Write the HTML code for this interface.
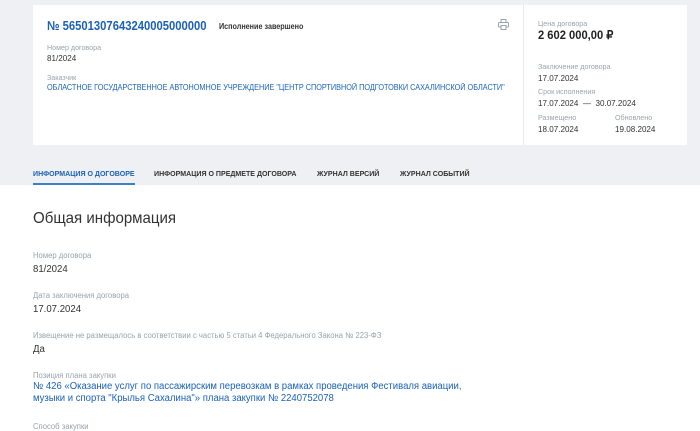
<!DOCTYPE html>
<html><head><meta charset="utf-8"><style>
body{margin:0;width:700px;height:427px;overflow:hidden;background:#fff;font-family:"Liberation Sans",sans-serif;position:relative}
.a{position:absolute;white-space:nowrap;transform-origin:0 0}
.gray{position:absolute;left:0;top:0;width:700px;height:185px;background:#eef0f3}
.card{position:absolute;left:33px;top:5px;width:654px;height:140px;background:#fff}
.div{position:absolute;left:523px;top:5px;width:1px;height:140px;background:#e8eaee}
.l{font-size:7.5px;color:#9aa3ad;transform:scaleX(.95)}
.v{font-size:8.5px;color:#333;transform:scaleX(.95)}
.bl{color:#1a62b8}
.tab{font-size:7.5px;font-weight:bold;color:#333;top:169px;transform:scaleX(.94)}
.L{font-size:8px;color:#9aa3ad;transform:scaleX(.96)}
.V{font-size:10px;color:#333;transform:scaleX(.96)}
</style></head><body>
<div class="gray"></div><div class="card"></div><div class="div"></div>
<div class="a bl" style="left:47px;top:18px;font-size:13px;font-weight:bold;transform:scaleX(.865)">№ 56501307643240005000000</div>
<div class="a" style="left:219px;top:22px;font-size:8px;font-weight:bold;color:#333;transform:scaleX(.9)">Исполнение завершено</div>
<svg class="a" style="left:498px;top:19px" width="11" height="11" viewBox="0 0 11 11" fill="none" stroke="#9aa3ad" stroke-width="1"><rect x="3" y="0.5" width="5" height="3"/><rect x="0.5" y="3.5" width="10" height="4.5" rx="1"/><rect x="3" y="6.5" width="5" height="4" fill="#fff"/></svg>
<div class="a l" style="left:47px;top:43px">Номер договора</div>
<div class="a v" style="left:47px;top:53px">81/2024</div>
<div class="a l" style="left:47px;top:73px">Заказчик</div>
<div class="a bl" style="left:47px;top:83px;font-size:8px;transform:scaleX(.91)">ОБЛАСТНОЕ ГОСУДАРСТВЕННОЕ АВТОНОМНОЕ УЧРЕЖДЕНИЕ "ЦЕНТР СПОРТИВНОЙ ПОДГОТОВКИ САХАЛИНСКОЙ ОБЛАСТИ"</div>
<div class="a l" style="left:538px;top:19px">Цена договора</div>
<div class="a" style="left:538px;top:28px;font-size:12px;font-weight:bold;color:#222;transform:scaleX(.93)">2 602 000,00 ₽</div>
<div class="a l" style="left:538px;top:62px">Заключение договора</div>
<div class="a v" style="left:538px;top:73px">17.07.2024</div>
<div class="a l" style="left:538px;top:87px">Срок исполнения</div>
<div class="a v" style="left:538px;top:98px">17.07.2024 &nbsp;— &nbsp;30.07.2024</div>
<div class="a l" style="left:538px;top:113px">Размещено</div>
<div class="a v" style="left:538px;top:124px">18.07.2024</div>
<div class="a l" style="left:615px;top:113px">Обновлено</div>
<div class="a v" style="left:615px;top:124px">19.08.2024</div>
<div class="a tab" style="left:33px;color:#1a62b8">ИНФОРМАЦИЯ О ДОГОВОРЕ</div>
<div class="a" style="left:33px;top:183px;width:102px;height:2px;background:#3b82c4"></div>
<div class="a tab" style="left:154px">ИНФОРМАЦИЯ О ПРЕДМЕТЕ ДОГОВОРА</div>
<div class="a tab" style="left:317px">ЖУРНАЛ ВЕРСИЙ</div>
<div class="a tab" style="left:400px">ЖУРНАЛ СОБЫТИЙ</div>
<div class="a" style="left:33px;top:210px;font-size:16px;color:#333;transform:scaleX(.94)">Общая информация</div>
<div class="a L" style="left:33px;top:251px">Номер договора</div>
<div class="a V" style="left:33px;top:264px">81/2024</div>
<div class="a L" style="left:33px;top:291px">Дата заключения договора</div>
<div class="a V" style="left:33px;top:304px">17.07.2024</div>
<div class="a L" style="left:33px;top:331px">Извещение не размещалось в соответствии с частью 5 статьи 4 Федерального Закона № 223-ФЗ</div>
<div class="a V" style="left:33px;top:344px">Да</div>
<div class="a L" style="left:33px;top:371px">Позиция плана закупки</div>
<div class="a bl" style="left:33px;top:381px;font-size:10px;line-height:12px;transform:scaleX(.953)">№ 426 «Оказание услуг по пассажирским перевозкам в рамках проведения Фестиваля авиации,<br>музыки и спорта "Крылья Сахалина"» плана закупки № 2240752078</div>
<div class="a L" style="left:33px;top:422px">Способ закупки</div>
</body></html>
